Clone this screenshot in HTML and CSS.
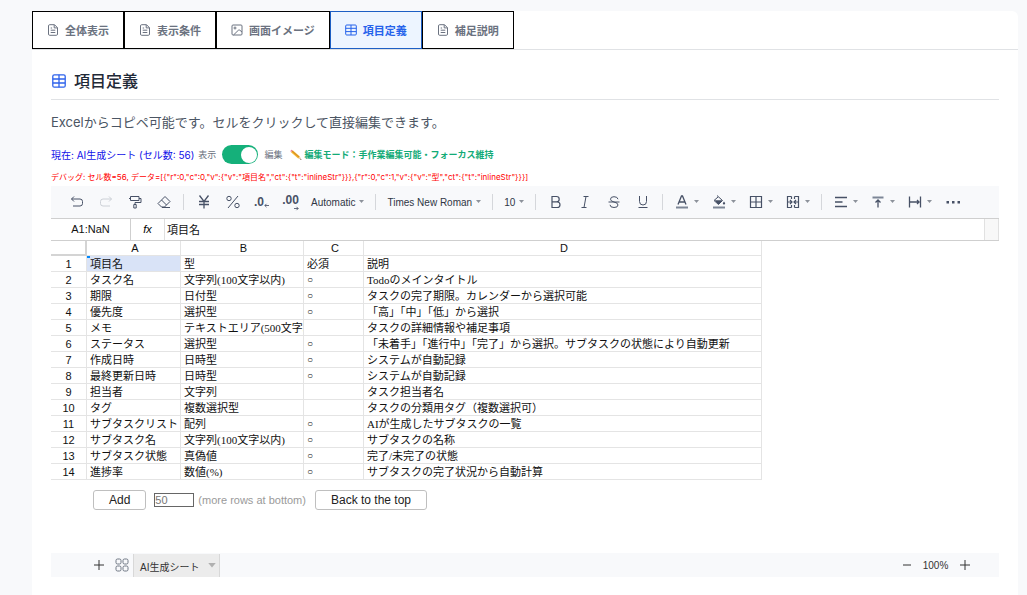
FILE: index.html
```html
<!DOCTYPE html>
<html lang="ja">
<head>
<meta charset="utf-8">
<meta name="viewport" content="width=device-width, initial-scale=1">
<title>項目定義</title>
<link rel="stylesheet" href="styles.css">
</head>
<body>
<svg class="defs" aria-hidden="true">
  <symbol id="doc" viewBox="0 0 12 12"><path d="M7.5.7H2.7Q1.5.7 1.5 1.9v8.2q0 1.2 1.2 1.2h6.6q1.2 0 1.2-1.2V3.7zM7.2.8v3.1h3.2M3.7 4h1.4M3.7 6.2h4.6M3.7 8.5h4.6"/></symbol>
  <symbol id="grid" viewBox="0 0 12 12"><rect x=".7" y="1" width="10.6" height="10" rx="1"/><path d="M.7 4.3h10.6M.7 7.6h10.6M6 1v10"/></symbol>
  <symbol id="caret" viewBox="0 0 5 4"><path d="M0 0h5L2.5 3z"/></symbol>
  <symbol id="plus" viewBox="0 0 12 12"><path d="M6 1v10M1 6h10"/></symbol>
</svg>
<main class="panel">
  <nav class="tabs">
    <button class="tab"><svg class="tab-icon"><use href="#doc"/></svg>全体表示</button>
    <button class="tab"><svg class="tab-icon"><use href="#doc"/></svg>表示条件</button>
    <button class="tab"><svg class="tab-icon" viewBox="0 0 12 12"><rect x="1" y="1" width="10" height="10" rx="1"/><circle cx="4" cy="4" r="1"/><path d="M2.5 11l4.800-4.700Q8 5.600 8.800 6.200L11 8"/></svg>画面イメージ</button>
    <button class="tab active"><svg class="tab-icon"><use href="#grid"/></svg>項目定義</button>
    <button class="tab"><svg class="tab-icon"><use href="#doc"/></svg>補足説明</button>
  </nav>
  <section class="content">
    <h1 class="title"><svg class="title-icon" viewBox="0 0 14 14"><rect x=".8" y=".8" width="12.400" height="12.400" rx="1.500"/><path d="M.8 5h12.400M.8 9h12.400M7 .8v12.400"/></svg>項目定義</h1>
    <p class="lead">Excelからコピペ可能です。セルをクリックして直接編集できます。</p>
    <div class="status">
      <span class="current">現在: AI生成シート (セル数: 56)</span>
      <label class="mode">表示<input class="switch" type="checkbox" role="switch" checked>編集</label>
      <span class="edit-mode"><svg class="pencil" viewBox="0 0 12 12"><path fill="#f5b52e" d="M2.700 1.300L9.900 7.500 8.200 9.400 1 3.200z"/><path fill="#c98022" d="M1.800 2.300l.5-.5 7.100 6.200-.5.6z"/><path fill="#ec8195" d="M1 3.200L.6 2.500Q.3 1.500 1.100 1q.7-.6 1.600.3z"/><path fill="#e8c8a0" d="M9.900 7.500l1.500 3.300-3.200-1.400z"/><path fill="#333" d="M10.900 9.700l.6 1.300-1.300-.5z"/></svg>編集モード：手作業編集可能・フォーカス維持</span>
    </div>
    <p class="debug">デバッグ: セル数=56, データ=[{"r":0,"c":0,"v":{"v":"項目名","ct":{"t":"inlineStr"}}},{"r":0,"c":1,"v":{"v":"型","ct":{"t":"inlineStr"}}}]</p>

    <div class="toolbar">
      <button class="tool" aria-label="Undo"><svg viewBox="0 0 16 16"><path d="M5 2.500L2.500 5 5 7.500M2.500 5H11q2.500 0 2.500 2.500v2Q13.500 12 11 12H4"/></svg></button>
      <button class="tool faded" aria-label="Redo"><svg viewBox="0 0 16 16"><path d="M11 2.500L13.500 5 11 7.500M13.500 5H5Q2.500 5 2.500 7.500v2Q2.500 12 5 12h7"/></svg></button>
      <button class="tool" aria-label="Paint format"><svg viewBox="0 0 16 16"><path d="M3.500 2.500h8.500v4H3.500zM12 4.500h2v4H8v2M6.800 10.500h2.400v3.500H6.800zM3.500 4.500H2"/></svg></button>
      <button class="tool" aria-label="Clear format"><svg viewBox="0 0 16 16"><path d="M9 2.500l5 5-5.500 5.500H5.500L2 9.500zM5.500 6l5 5M6 13.500h8"/></svg></button>
      <span class="sep"></span>
      <button class="tool" aria-label="Currency"><svg viewBox="0 0 16 16"><path stroke-width="1.300" d="M3.500 1.500L8 7.500l4.500-6M8 7.500V14.500M3 7.500h10M3 10.500h10"/></svg></button>
      <button class="tool" aria-label="Percent"><svg viewBox="0 0 16 16"><circle cx="4" cy="4.500" r="2.200"/><circle cx="12" cy="11.500" r="2.200"/><path d="M13 2L3 14"/></svg></button>
      <button class="tool decimals" aria-label="Decrease decimals">.0<svg class="deci-arrow" viewBox="0 0 6 6"><path d="M6 3H1M3 1L1 3l2 2"/></svg></button>
      <button class="tool decimals" aria-label="Increase decimals">.00<svg class="deci-arrow under" viewBox="0 0 6 6"><path d="M0 3h5M3 1l2 2-2 2"/></svg></button>
      <button class="menu">Automatic<svg class="caret"><use href="#caret"/></svg></button>
      <span class="sep"></span>
      <button class="menu">Times New Roman<svg class="caret"><use href="#caret"/></svg></button>
      <span class="sep"></span>
      <button class="menu">10<svg class="caret"><use href="#caret"/></svg></button>
      <span class="sep"></span>
      <button class="tool" aria-label="Bold"><svg viewBox="0 0 16 16"><path stroke-width="1.200" d="M4 2.500h4.500a2.700 2.700 0 0 1 0 5.400H4zM4 7.900h5.200a2.800 2.800 0 0 1 0 5.600H4z"/></svg></button>
      <button class="tool" aria-label="Italic"><svg viewBox="0 0 16 16"><path d="M6.500 2.500h5M4.500 13.500h5M9 2.500l-2 11"/></svg></button>
      <button class="tool" aria-label="Strikethrough"><svg viewBox="0 0 16 16"><path d="M12 5.200Q11.500 2.700 8 2.700 4.500 2.700 4.500 5.200 4.500 7.200 8 8q4 .8 4 3 0 2.500-4 2.500T4 10.800M2.500 8h11"/></svg></button>
      <button class="tool" aria-label="Underline"><svg viewBox="0 0 16 16"><path d="M4.500 2v5.500q0 3.500 3.500 3.500t3.500-3.500V2M3.500 13.500h9"/></svg></button>
      <span class="sep"></span>
      <button class="tool wide" aria-label="Text color"><svg viewBox="0 0 16 16"><path stroke-width="1.300" d="M4 10.500L7.500 2h1L12 10.500M5.500 8h5"/><path class="bar" d="M2 13.500h12"/></svg><svg class="caret"><use href="#caret"/></svg></button>
      <button class="tool wide" aria-label="Fill color"><svg viewBox="0 0 16 16"><path d="M6 1.500l5.500 5L7.500 10.500 3 6.500 7 3"/><path class="solid" d="M3.500 6.200h8L7.500 10.500zM13 7.500q2.400 3 0 3t0-3z"/><path class="bar" d="M2 13.500h12"/></svg><svg class="caret"><use href="#caret"/></svg></button>
      <button class="tool wide" aria-label="Borders"><svg viewBox="0 0 16 16"><path stroke-width="1.200" d="M2.500 2.500h11v11h-11zM8 2.500v11M2.500 8h11"/></svg><svg class="caret"><use href="#caret"/></svg></button>
      <button class="tool wide" aria-label="Merge cells"><svg viewBox="0 0 16 16"><path stroke-width="1.200" d="M6.500 2.500h-4v11h4M9.500 2.500h4v11h-4M6.500 2.500v2.500M9.500 2.500v2.500M6.500 11v2.500M9.500 11v2.500M2.500 8H7M13.500 8H9M5 6l2 2-2 2M11 6l-2 2 2 2"/></svg><svg class="caret"><use href="#caret"/></svg></button>
      <span class="sep"></span>
      <button class="tool wide" aria-label="Horizontal align"><svg viewBox="0 0 16 16"><path stroke-width="1.300" d="M2 3.500h12M2 8h7.500M2 12.500h12"/></svg><svg class="caret"><use href="#caret"/></svg></button>
      <button class="tool wide" aria-label="Vertical align"><svg viewBox="0 0 16 16"><path class="bar" d="M2.500 3.500h11"/><path stroke-width="1.300" d="M8 13.500V6.500M5.500 8.500L8 6l2.500 2.500"/></svg><svg class="caret"><use href="#caret"/></svg></button>
      <button class="tool wide" aria-label="Text wrap"><svg viewBox="0 0 16 16"><path stroke-width="1.300" d="M2.500 2.500v11M13.500 2.500v11M2.500 8h9M10 6l2 2-2 2"/></svg><svg class="caret"><use href="#caret"/></svg></button>
      <button class="tool" aria-label="More"><svg viewBox="0 0 16 16"><path class="solid" d="M1.500 7h2.500v2.500H1.500zM7 7h2.500v2.500H7zM12.500 7H15v2.500h-2.500z"/></svg></button>
    </div>

    <div class="formula">
      <span class="name-box">A1:NaN</span>
      <span class="fx">fx</span>
      <input class="formula-input" aria-label="数式" value="項目名">
      <span class="formula-end"></span>
    </div>

    <table class="sheet">
      <colgroup><col class="c-num"><col class="c-a"><col class="c-b"><col class="c-c"><col class="c-d"></colgroup>
      <thead><tr><th class="corner"></th><th>A</th><th>B</th><th>C</th><th>D</th></tr></thead>
      <tbody>
        <tr><th>1</th><td class="selected">項目名</td><td>型</td><td>必須</td><td>説明</td></tr>
        <tr><th>2</th><td>タスク名</td><td>文字列(100文字以内)</td><td class="required">○</td><td>Todoのメインタイトル</td></tr>
        <tr><th>3</th><td>期限</td><td>日付型</td><td class="required">○</td><td>タスクの完了期限。カレンダーから選択可能</td></tr>
        <tr><th>4</th><td>優先度</td><td>選択型</td><td class="required">○</td><td>「高」「中」「低」から選択</td></tr>
        <tr><th>5</th><td>メモ</td><td>テキストエリア(500文字以内)</td><td></td><td>タスクの詳細情報や補足事項</td></tr>
        <tr><th>6</th><td>ステータス</td><td>選択型</td><td class="required">○</td><td>「未着手」「進行中」「完了」から選択。サブタスクの状態により自動更新</td></tr>
        <tr><th>7</th><td>作成日時</td><td>日時型</td><td class="required">○</td><td>システムが自動記録</td></tr>
        <tr><th>8</th><td>最終更新日時</td><td>日時型</td><td class="required">○</td><td>システムが自動記録</td></tr>
        <tr><th>9</th><td>担当者</td><td>文字列</td><td></td><td>タスク担当者名</td></tr>
        <tr><th>10</th><td>タグ</td><td>複数選択型</td><td></td><td>タスクの分類用タグ（複数選択可）</td></tr>
        <tr><th>11</th><td>サブタスクリスト</td><td>配列</td><td class="required">○</td><td>AIが生成したサブタスクの一覧</td></tr>
        <tr><th>12</th><td>サブタスク名</td><td>文字列(100文字以内)</td><td class="required">○</td><td>サブタスクの名称</td></tr>
        <tr><th>13</th><td>サブタスク状態</td><td>真偽値</td><td class="required">○</td><td>完了/未完了の状態</td></tr>
        <tr><th>14</th><td>進捗率</td><td>数値(%)</td><td class="required">○</td><td>サブタスクの完了状況から自動計算</td></tr>
      </tbody>
    </table>

    <div class="add-rows">
      <button class="plain">Add</button>
      <input class="row-count" id="row-count" type="text" placeholder="50">
      <label class="hint" for="row-count">(more rows at bottom)</label>
      <button class="plain">Back to the top</button>
    </div>

    <footer class="sheet-bar">
      <button class="bar-button" aria-label="Add sheet"><svg class="mark"><use href="#plus"/></svg></button>
      <button class="bar-button" aria-label="Sheet list"><svg class="mark boxes" viewBox="0 0 14 14"><rect x="1" y="1" width="5" height="5" rx="1.500"/><rect x="8" y="1" width="5" height="5" rx="1.500"/><rect x="1" y="8" width="5" height="5" rx="1.500"/><rect x="8" y="8" width="5" height="5" rx="1.500"/></svg></button>
      <button class="sheet-tab">AI生成シート<svg class="tab-caret"><use href="#caret"/></svg></button>
      <div class="zoom">
        <button class="bar-button" aria-label="Zoom out"><svg class="mark" viewBox="0 0 12 12"><path d="M2 6h8"/></svg></button>
        <span class="zoom-value">100%</span>
        <button class="bar-button" aria-label="Zoom in"><svg class="mark"><use href="#plus"/></svg></button>
      </div>
    </footer>
  </section>
</main>
</body>
</html>
```
FILE: styles.css
```css
* { box-sizing: border-box; }

body {
  margin: 0;
  padding: 11px 9px 0 32px;
  min-height: 100vh;
  display: flex;
  flex-direction: column;
  background: #f8f9fb;
  color: #1f2937;
  font-family: Inter, "Noto Sans CJK JP", sans-serif;
}

button, input {
  margin: 0;
  padding: 0;
  border: 0;
  background: none;
  color: inherit;
  font: inherit;
}

svg {
  flex: none;
  fill: none;
  stroke: currentColor;
}

.defs {
  position: absolute;
  width: 0;
  height: 0;
}

.panel {
  flex: 1;
  background: #fff;
  border-radius: 6px 6px 0 0;
}

/* Tabs */
.tabs {
  display: flex;
  border-bottom: 1px solid #e0e2e5;
}

.tab {
  display: flex;
  align-items: center;
  gap: 6px;
  height: 38px;
  padding: 0 14px;
  border: 1px solid #000;
  background: #fff;
  color: #6b7280;
  font-size: 11px;
  font-weight: 600;
  white-space: nowrap;
}

.tab.active {
  border-color: #1d5fc4;
  background: #edf5ff;
  color: #2563eb;
}

.tab-icon {
  width: 12px;
  height: 12px;
}

/* Heading area */
.content { padding: 19px 19px 18px; }

.title {
  display: flex;
  align-items: center;
  gap: 8px;
  margin: 0;
  padding: 0 1px 6px;
  border-bottom: 1px solid #e0e2e5;
  font-size: 16px;
  font-weight: 500;
  line-height: 24px;
}

.title-icon {
  width: 14px;
  height: 14px;
  color: #2f63eb;
  stroke-width: 1.3;
}

.lead {
  margin: 12px 0 13px;
  color: #4b5563;
  font-size: 13px;
  line-height: 20px;
}

.status {
  display: flex;
  align-items: center;
  gap: 4px;
  height: 19px;
  font-size: 9px;
  white-space: nowrap;
}

.current {
  color: #1010e8;
  font-size: 10px;
}

.mode {
  display: flex;
  align-items: center;
  gap: 6px;
  color: #6b7280;
}

.switch {
  display: flex;
  align-items: center;
  width: 36px;
  height: 19px;
  padding: 1px;
  border-radius: 10px;
  background: #15b07a;
  appearance: none;
}

.switch::before {
  content: "";
  width: 16px;
  height: 16px;
  border-radius: 50%;
  background: #fff;
}

.switch:checked { justify-content: flex-end; }

.edit-mode {
  display: flex;
  align-items: center;
  gap: 2px;
  margin-left: 4px;
  color: #12ab77;
  font-weight: 600;
}

.pencil {
  width: 12px;
  height: 12px;
  stroke: none;
}

.debug {
  margin: 7px 0 3px;
  color: #f00;
  font-size: 8px;
  line-height: 12px;
  white-space: nowrap;
}

/* Toolbar */
.toolbar {
  display: flex;
  align-items: center;
  height: 32px;
  padding-left: 11px;
  background: #f8f9fb;
  color: #475166;
  font-family: "Liberation Sans", sans-serif;
  white-space: nowrap;
}

.tool {
  display: flex;
  align-items: center;
  justify-content: center;
  width: 29px;
  height: 24px;
}

.tool > svg:first-child {
  width: 16px;
  height: 16px;
}

.tool.faded { color: #ccd0d6; }

.tool.wide {
  gap: 4px;
  width: 37px;
}

.decimals {
  flex-wrap: wrap;
  align-content: center;
  font-size: 12px;
  font-weight: 700;
  line-height: 12px;
}

.tool > svg.deci-arrow {
  align-self: flex-end;
  width: 5px;
  height: 5px;
}

.tool > svg.under { margin-left: 12px; }

.bar {
  stroke: #7d8696;
  stroke-width: 2;
}

.solid {
  fill: currentColor;
  stroke: none;
}

.menu {
  display: flex;
  align-items: center;
  gap: 4px;
  height: 24px;
  padding: 0 6px;
  color: #2f3645;
  font-size: 10px;
}

.tool > svg.caret,
.caret {
  width: 5px;
  height: 4px;
  fill: #8d929b;
  stroke: none;
}

.sep {
  width: 1px;
  height: 16px;
  margin: 0 5px;
  background: #d5d7db;
}

/* Formula bar */
.formula {
  display: flex;
  height: 23px;
  border-top: 1px solid #cfcfcf;
  border-bottom: 1px solid #cfcfcf;
  font-family: "Liberation Sans", "Noto Sans CJK JP", sans-serif;
  font-size: 11px;
  line-height: 21px;
  color: #111;
}

.name-box {
  width: 80px;
  border-right: 1px solid #cfcfcf;
  text-align: center;
}

.fx {
  width: 34px;
  border-right: 1px solid #dfdfdf;
  color: #000;
  font-style: italic;
  text-align: center;
}

.formula-input {
  flex: 1;
  min-width: 0;
  padding: 2px 0 0 2px;
}

.formula-end {
  width: 15px;
  border: solid #e1e1e1;
  border-width: 0 1px;
  background: #f8f8f8;
}

/* Sheet grid */
.sheet {
  width: 711px;
  table-layout: fixed;
  border-collapse: separate;
  border-spacing: 0;
  color: #111;
  font-family: "Liberation Serif", "Noto Sans CJK JP", serif;
  font-size: 11px;
  line-height: 13px;
}

.c-num { width: 36px; }
.c-a { width: 94px; }
.c-b { width: 123px; }
.c-c { width: 60px; }
.c-d { width: 398px; }

.sheet th,
.sheet td {
  height: 16px;
  padding: 2px 0 0 3px;
  border: solid #e4e4e4;
  border-width: 0 1px 1px 0;
  overflow: hidden;
  text-align: left;
  white-space: nowrap;
}

.sheet th {
  padding: 2px 0 0;
  font-family: "Liberation Sans", sans-serif;
  font-weight: 400;
  text-align: center;
}

.sheet thead th {
  height: 15px;
  padding: 0 0 0 3px;
  line-height: 14px;
}

.sheet thead .corner {
  border: solid #d4d4d4;
  border-width: 0 2px 2px 0;
}

.sheet .required {
  padding-top: 0;
  font-size: 10px;
}

.sheet .selected { background: linear-gradient(#0188fb, #0188fb) 0 0 / 3px 2px no-repeat #d9e3f7; }

/* Row controls */
.add-rows {
  display: flex;
  align-items: center;
  margin: 10px 0 43px 42px;
  font-family: "Liberation Sans", sans-serif;
  font-size: 11px;
  white-space: nowrap;
}

.plain {
  height: 20px;
  padding: 0 15px;
  border: 1px solid #bfbfbf;
  border-radius: 3px;
  background: #fff;
  color: #222;
  font-size: 12px;
}

.row-count {
  width: 40px;
  height: 14px;
  margin: 0 4px 0 8px;
  border: 1px solid #666;
}

.row-count::placeholder { color: #777; }

.hint {
  margin-right: 9px;
  color: #9a9a9a;
}

/* Sheet bar */
.sheet-bar {
  display: flex;
  align-items: center;
  height: 24px;
  padding: 0 23px 0 36px;
  background: #f8f9fb;
  color: #333;
  font-family: "Liberation Sans", "Noto Sans CJK JP", sans-serif;
  font-size: 10px;
}

.bar-button {
  display: flex;
  align-items: center;
  justify-content: center;
  width: 23px;
  height: 24px;
}

.mark {
  width: 12px;
  height: 12px;
}

.mark.boxes {
  width: 14px;
  height: 14px;
  color: #6f7783;
}

.sheet-tab {
  display: flex;
  align-items: center;
  gap: 9px;
  height: 23px;
  padding: 2px 3px 0 6px;
  border: solid #d8d8d8;
  border-width: 0 1px;
  background: #ececec;
}

.tab-caret {
  width: 8px;
  height: 6px;
  fill: #b0b0b0;
  stroke: none;
}

.zoom {
  display: flex;
  align-items: center;
  margin-left: auto;
}

.zoom-value {
  width: 35px;
  text-align: center;
}
```
